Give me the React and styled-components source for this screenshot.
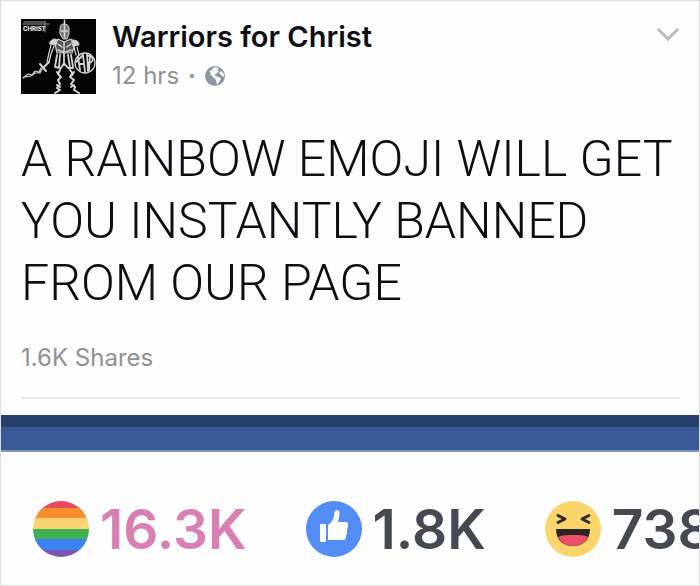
import React from "react";
import styled, { createGlobalStyle } from "styled-components";

const GlobalStyle = createGlobalStyle`
  *, *::before, *::after { box-sizing: border-box; }
  body { margin: 0; background: #fdfdfd; font-family: Inter, sans-serif; }
`;

const Post = styled.article`
  display: flex;
  flex-direction: column;
  min-height: 100vh;
  border: 1px solid #dedede;
  background: #fdfdfd;
  overflow: hidden;
`;

const Header = styled.header`
  display: flex;
  align-items: flex-start;
  gap: 16px;
  padding: 18px 20px 0;
`;

const Avatar = styled.svg`
  flex: none;
  width: 75px;
  height: 75px;
`;

const Byline = styled.div`
  flex: 1;
  min-width: 0;
`;

const PageName = styled.a`
  display: block;
  color: #0c0f14;
  font-size: 29px;
  font-weight: 600;
  line-height: 36px;
  text-decoration: none;
  white-space: nowrap;
`;

const Meta = styled.div`
  display: flex;
  align-items: center;
  gap: 9px;
  margin-top: 4px;
  color: #8f9294;
  font-size: 24px;
  line-height: 34px;
`;

const Separator = styled.span`
  font-weight: 700;
`;

const Globe = styled.svg`
  width: 20px;
  height: 20px;
`;

const MenuButton = styled.button`
  display: flex;
  padding: 8px 0;
  border: 0;
  background: none;
  cursor: pointer;
`;

const Chevron = styled.svg`
  width: 22px;
  height: 14px;
`;

const Message = styled.p`
  margin: 34px 20px 0;
  color: #0c0f14;
  font-family: Roboto, sans-serif;
  font-size: 50px;
  font-weight: 300;
  line-height: 62px;
`;

const Shares = styled.div`
  margin: 27px 20px 0;
  padding-bottom: 22px;
  border-bottom: 2px solid #e9eaea;
  color: #8f9294;
  font-size: 24px;
  line-height: 34px;
`;

const Banner = styled.div`
  height: 37px;
  margin-top: 16px;
  border-top: 12px solid #263f6b;
  border-bottom: 2px solid #8496bb;
  background: #3a5997;
`;

const Reactions = styled.ul`
  display: flex;
  gap: 59px;
  margin: 0;
  padding: 45px 32px 20px;
  list-style: none;
`;

const Reaction = styled.li`
  display: flex;
  flex: none;
  align-items: center;
  gap: 11px;
  color: ${(p) => p.$color};
  font-size: 55px;
  font-weight: 600;
  line-height: 64px;
`;

const ReactionIcon = styled.svg`
  width: 56px;
  height: 56px;
`;

function WarriorAvatar() {
  return (
    <Avatar viewBox="0 0 75 75" role="img" aria-label="Warriors for Christ">
      <rect width="75" height="75" fill="#050505" />
      <g fill="none" stroke="#d4d4d4" strokeLinecap="round" strokeLinejoin="round">
        <path d="M3 3h20M2 5h26M24 2v11" stroke="#999" strokeWidth="1" />
        <path d="M39 9c0-3 2-4 4-4s5 1 5 4v6l-2 5h-4l-3-5z" fill="#777" strokeWidth="1" />
        <path d="M43.500 1v18M40 12h7" strokeWidth="1.500" />
        <path d="M37 20l6 3 7-3 4 5-3 9H36l-2-9z" fill="#555" strokeWidth="1.200" />
        <path d="M43 23v13M37 25l4 3M50 25l-4 3M37 31l5 2M50 31l-5 2" strokeWidth="1.500" />
        <path d="M29 23c2-3 5-4 7-2l-1 5-6-1zM51 21c4 0 7 1 7 5l-6 1z" fill="#d4d4d4" strokeWidth="1" />
        <path d="M30 26l-2 8-2 9M33 27l-3 8-2 8M56 28l2 8-3 4M53 28l2 8" strokeWidth="1.200" />
        <path d="M36 36l-2 12M39 36l-1 13M43 36v10M47 36l2 13M50 36l2 12M34 48l6 1 3-5 4 5h5" strokeWidth="1.800" />
        <path d="M39 51l-2 4 3 3-3 3 2 4-3 4 3 2-5 3M49 51l3 4-3 3 4 3-3 4 4 3-1 3 5 3M36 53l2 3M53 53l-3 3M36 66l3 2M53 66l-3 2" strokeWidth="2" />
        <path d="M28 43l-6 6M19 45l6 7" strokeWidth="2" />
        <path d="M2 59l5-4 4 1 3-4 4 1 2-4M4 58l6-1 4-3 5 0 2-4" strokeWidth="1.200" />
        <circle cx="64" cy="44" r="10" strokeWidth="1.300" />
        <path d="M57 38l2 13M55 43l7-7 2 17M59 45h4M66 35l1 17M69 36l-1 15M66 37c8-1 7 7 1 7" strokeWidth="1.800" />
      </g>
      <text x="2" y="12" fill="#e6e6e6" fontFamily="Inter, sans-serif" fontSize="6" fontWeight="800">CHRIST</text>
    </Avatar>
  );
}

function RainbowIcon() {
  const bands = ["#e84a5f", "#f78f2f", "#f8d474", "#3fb04f", "#3b82f0", "#7a55b5"];
  const tops = [0, 7, 17, 28, 38, 49];
  return (
    <ReactionIcon viewBox="0 0 56 56" role="img" aria-label="Pride">
      <clipPath id="pride-disc"><circle cx="28" cy="28" r="28" /></clipPath>
      <g clipPath="url(#pride-disc)">
        {bands.map((fill, i) => (
          <rect key={fill} y={tops[i]} width="56" height="12" fill={fill} />
        ))}
      </g>
    </ReactionIcon>
  );
}

function LikeIcon() {
  return (
    <ReactionIcon viewBox="0 0 56 56" role="img" aria-label="Like">
      <circle cx="28" cy="28" r="28" fill="#538df5" />
      <rect x="14" y="23" width="6" height="18" rx="1" fill="#fff" />
      <path d="M22 39V24c3-2 5-5 6-9 0-4 1-6 3-6 3 0 3 4 2 7l-1 5h8c2 0 2 2 2 4l-1 4v3l-1 3c0 3-1 4-3 4z" fill="#fff" />
    </ReactionIcon>
  );
}

function HahaIcon() {
  return (
    <ReactionIcon viewBox="0 0 56 56" role="img" aria-label="Haha">
      <circle cx="28" cy="28" r="28" fill="#fad56c" />
      <path d="M12 14l8 4-8 4M45 14l-8 4 8 4" fill="none" stroke="#2b2927" strokeWidth="2.800" strokeLinejoin="round" />
      <path d="M11 28h34c0 11-7 17-17 17s-17-6-17-17z" fill="#2b2525" />
      <path d="M13 36c4-2 9-2 15-2s11 0 15 2c-3 6-8 9-15 9s-12-3-15-9z" fill="#ef5068" />
    </ReactionIcon>
  );
}

const reactions = [
  { Icon: RainbowIcon, count: "16.3K", color: "#d880b4" },
  { Icon: LikeIcon, count: "1.8K", color: "#454a52" },
  { Icon: HahaIcon, count: "738", color: "#454a52" },
];

export default function App() {
  return (
    <>
      <GlobalStyle />
      <Post>
        <Header>
          <WarriorAvatar />
          <Byline>
            <PageName href="#page">Warriors for Christ</PageName>
            <Meta>
              <span>12 hrs</span>
              <Separator>·</Separator>
              <Globe viewBox="0 0 20 20" role="img" aria-label="Public">
                <circle cx="10" cy="10" r="10" fill="#8b95a3" />
                <path d="M9 1l5 1-2 2 2 1-3 3-2 1 4 2 3 1-1 3-3 4-1-5-3-3-3-3 1-1-2-2 3-1z" fill="#fdfdfd" />
                <path d="M16 5l3 3v3l-3-2-2-2z" fill="#fdfdfd" />
              </Globe>
            </Meta>
          </Byline>
          <MenuButton type="button" aria-label="Post options">
            <Chevron viewBox="0 0 22 14">
              <path d="M1 2l10 10L21 2" fill="none" stroke="#b9babb" strokeWidth="3" />
            </Chevron>
          </MenuButton>
        </Header>
        <Message>A RAINBOW EMOJI WILL GET YOU INSTANTLY BANNED FROM OUR PAGE</Message>
        <Shares>1.6K Shares</Shares>
        <Banner />
        <Reactions>
          {reactions.map(({ Icon, count, color }) => (
            <Reaction key={count} $color={color}>
              <Icon />
              <span>{count}</span>
            </Reaction>
          ))}
        </Reactions>
      </Post>
    </>
  );
}
